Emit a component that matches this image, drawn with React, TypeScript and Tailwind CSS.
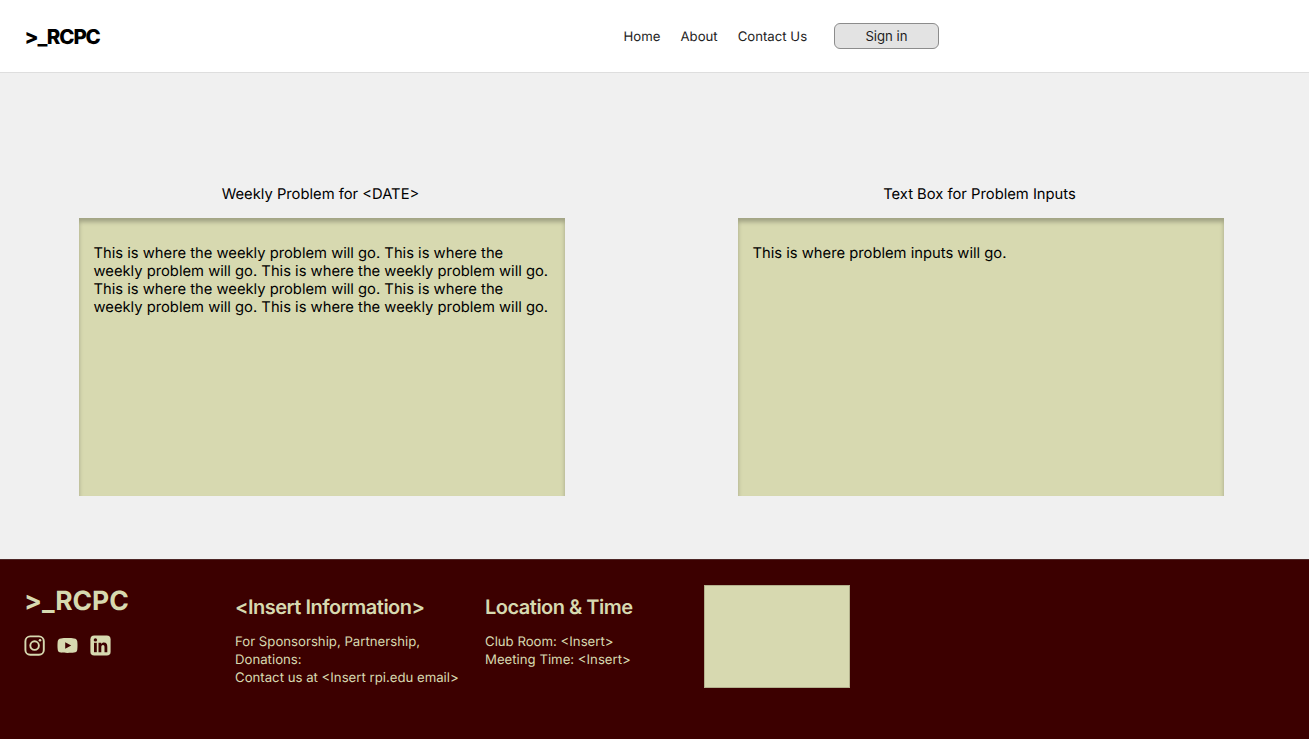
import React from "react";

const navLinks = ["Home", "About", "Contact Us"];

function InstagramIcon() {
  return (
    <svg width="21" height="21" viewBox="0 0 21 21" fill="none" stroke="#d7d9b0" strokeWidth="1.9">
      <rect x="1.4" y="1.4" width="18.4" height="18.4" rx="4.8" />
      <circle cx="10.6" cy="10.6" r="4.3" />
      <circle cx="16" cy="5.2" r="1.3" fill="#d7d9b0" stroke="none" />
    </svg>
  );
}

function YoutubeIcon() {
  return (
    <svg width="21" height="21" viewBox="0 0 21 21" fill="#d7d9b0">
      <path
        fillRule="evenodd"
        d="M4 3.4C7 2.9 14 2.9 17 3.4C19.3 3.7 20.1 4.8 20.3 6.6C20.6 9 20.6 12 20.3 14.4C20.1 16.2 19.3 17.3 17 17.6C14 18.1 7 18.1 4 17.6C1.7 17.3 0.9 16.2 0.7 14.4C0.4 12 0.4 9 0.7 6.6C0.9 4.8 1.7 3.7 4 3.4ZM8.2 7.2V13.8L14.2 10.5Z"
      />
    </svg>
  );
}

function LinkedinIcon() {
  return (
    <svg width="21" height="21" viewBox="0 0 21 21" fill="#d7d9b0">
      <rect x="0.4" y="0.4" width="20.2" height="20.2" rx="3.8" />
      <g fill="#3c0000">
        <circle cx="5.4" cy="4.9" r="1.7" />
        <rect x="4" y="7.8" width="2.8" height="9.4" />
        <path d="M8.5 7.8H11.2V9.1C11.7 8.2 12.7 7.6 13.9 7.6C16.6 7.6 17.3 9.3 17.3 11.8V17.2H14.5V12.4C14.5 11.1 14.3 10 13 10C11.6 10 11.3 11.1 11.3 12.4V17.2H8.5Z" />
      </g>
    </svg>
  );
}

function Panel({ title, children }: { title: string; children: React.ReactNode }) {
  return (
    <section className="w-[486px]">
      <h2 className="pr-[3px] text-center text-[14.75px] leading-[18px]">{title}</h2>
      <div className="mt-[15px] h-[278px] whitespace-nowrap bg-[#d7d9b0] pl-[14.5px] pt-[26px] text-[14.75px] leading-[18px] shadow-[inset_0_4px_4px_rgba(0,0,0,0.25)]">
        {children}
      </div>
    </section>
  );
}

export default function App() {
  return (
    <div className="flex h-[739px] w-[1309px] flex-col overflow-hidden bg-[#f0f0f0] font-['Inter',sans-serif] text-black [text-rendering:geometricPrecision]">
      <header className="flex h-[73px] shrink-0 items-center border-b border-[#dedede] bg-white">
        <div className="ml-[24.5px] w-[599px] pt-px text-[20.5px] font-extrabold leading-6 tracking-[-1.15px]">&gt;_RCPC</div>
        <nav className="flex w-[210.5px] gap-[20px] pt-px text-[13.2px] leading-5 text-[#1e1e1e]">
          {navLinks.map((label) => (
            <a key={label} className="whitespace-nowrap">{label}</a>
          ))}
        </nav>
        <button className="h-[26px] w-[105px] rounded-[6px] border border-[#8c8c8c] bg-[#e3e3e3] text-[13.2px] leading-5 text-[#1e1e1e]">
          Sign in
        </button>
      </header>

      <main className="flex h-[486px] shrink-0 gap-[173px] pl-[79px] pt-[112px]">
        <Panel title="Weekly Problem for <DATE>">
          This is where the weekly problem will go. This is where the<br />
          weekly problem will go. This is where the weekly problem will go.<br />
          This is where the weekly problem will go. This is where the<br />
          weekly problem will go. This is where the weekly problem will go.
        </Panel>
        <Panel title="Text Box for Problem Inputs">This is where problem inputs will go.</Panel>
      </main>

      <footer className="flex flex-1 border-t border-[#4d2626] bg-[#3c0000] text-[#d7d9b0]">
        <div className="w-[235px] shrink-0 pl-[24px] pt-[25px]">
          <div className="text-[26.5px] font-bold leading-8 tracking-[-0.1px]">&gt;_RCPC</div>
          <div className="mt-[18px] flex gap-[12px]">
            <InstagramIcon />
            <YoutubeIcon />
            <LinkedinIcon />
          </div>
        </div>
        <div className="w-[250px] shrink-0 whitespace-nowrap pt-[35px]">
          <h3 className="text-[20px] font-semibold leading-6 tracking-[-0.5px]">&lt;Insert Information&gt;</h3>
          <p className="mt-[14px] text-[13.2px] leading-[18px]">
            For Sponsorship, Partnership,<br />
            Donations:<br />
            Contact us at &lt;Insert rpi.edu email&gt;
          </p>
        </div>
        <div className="w-[219px] shrink-0 whitespace-nowrap pt-[35px]">
          <h3 className="text-[20px] font-semibold leading-6 tracking-[-0.5px]">Location &amp; Time</h3>
          <p className="mt-[14px] text-[13.2px] leading-[18px]">
            Club Room: &lt;Insert&gt;<br />
            Meeting Time: &lt;Insert&gt;
          </p>
        </div>
        <div className="mt-[25px] h-[103px] w-[146px] border border-[#b3b18d] bg-[#d7d9b0]" />
      </footer>
    </div>
  );
}
